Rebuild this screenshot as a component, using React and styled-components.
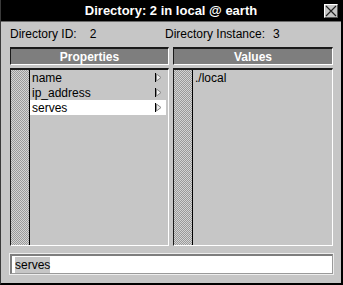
import React from 'react';
import { styled, createGlobalStyle } from 'styled-components';

const Global = createGlobalStyle`
  body {
    margin: 0;
    background: #c6c6c6;
    font-family: "Liberation Sans", Arial, sans-serif;
  }
`;

const Window = styled.div`
  width: 343px;
  height: 285px;
  box-sizing: border-box;
  background: #c6c6c6;
  border-left: 1px solid #3a3a3a;
  border-right: 2px solid #000;
  border-bottom: 2px solid #000;
  display: flex;
  flex-direction: column;
  overflow: hidden;
`;

const TitleBar = styled.div`
  height: 22px;
  box-sizing: border-box;
  flex-shrink: 0;
  background: #000;
  color: #fff;
  display: flex;
  align-items: center;
  justify-content: center;
  position: relative;
  font-size: 13px;
  font-weight: 700;
  border-bottom: 1px solid #6a6a6a;
`;

const CloseButton = styled.div`
  position: absolute;
  right: 3px;
  top: 4px;
  width: 14px;
  height: 14px;
  box-sizing: border-box;
  background: #c6c6c6;
  border-top: 1px solid #fff;
  border-left: 1px solid #fff;
  border-right: 1px solid #555;
  border-bottom: 1px solid #555;
  display: flex;
  align-items: center;
  justify-content: center;
`;

const Body = styled.div`
  flex: 1;
  display: flex;
  flex-direction: column;
  padding: 2px 8px 0 9px;
`;

const InfoRow = styled.div`
  display: grid;
  grid-template-columns: 155px 1fr;
  height: 20px;
  align-items: center;
  font-size: 12px;
  color: #000;
`;

const Info = styled.div`
  display: flex;
  gap: ${(p) => p.$gap}px;
`;

const Columns = styled.div`
  margin-top: 3px;
  display: grid;
  grid-template-columns: 159px 160px;
  column-gap: 4px;
`;

const Column = styled.div`
  display: flex;
  flex-direction: column;
  gap: 3px;
`;

const Header = styled.div`
  height: 18px;
  box-sizing: border-box;
  background: #7e7e7e;
  border-top: 2px solid #1a1a1a;
  border-left: 1px solid #1a1a1a;
  border-right: 1px solid #fff;
  border-bottom: 1px solid #fff;
  color: #fff;
  font-size: 12px;
  font-weight: 700;
  display: flex;
  align-items: center;
  justify-content: center;
`;

const ListFrame = styled.div`
  height: 178px;
  box-sizing: border-box;
  border-top: 2px solid #1a1a1a;
  border-left: 1px solid #1a1a1a;
  border-right: 1px solid #fff;
  border-bottom: 1px solid #fff;
  display: flex;
`;

const Gutter = styled.div`
  width: 18px;
  flex-shrink: 0;
  border-right: 1px solid #000;
  background: repeating-conic-gradient(#9a9a9a 0 25%, #d4d4d4 0 50%) 0 0 / 2px 2px;
`;

const List = styled.div`
  flex: 1;
  padding: 0 2px 0 0;
  display: flex;
  flex-direction: column;
`;

const Item = styled.div`
  height: 15px;
  display: flex;
  align-items: center;
  justify-content: space-between;
  padding: 0 4px 0 2px;
  font-size: 12px;
  color: #000;
  background: ${(p) => (p.$selected ? '#fff' : 'transparent')};
`;

const Field = styled.div`
  margin-top: 8px;
  height: 20px;
  box-sizing: border-box;
  background: #fff;
  border-top: 2px solid #7e7e7e;
  border-left: 2px solid #7e7e7e;
  border-right: 1px solid #9a9a9a;
  border-bottom: 1px solid #9a9a9a;
  outline: 1px solid #eee;
  display: flex;
  align-items: center;
  padding-left: 3px;
  font-size: 12px;
`;

const Selected = styled.span`
  background: #c6c6c6;
  padding: 1px 0;
`;

const Arrow = () => (
  <svg width="7" height="9" viewBox="0 0 7 9">
    <line x1="0.5" y1="0" x2="0.5" y2="9" stroke="#000" />
    <polygon points="1.5,1 6,4.5 1.5,8" fill="#eee" stroke="#888" strokeWidth="1" />
  </svg>
);

const properties = ['name', 'ip_address', 'serves'];

export default function App() {
  return (
    <>
      <Global />
      <Window>
        <TitleBar>
          Directory: 2 in local @ earth
          <CloseButton>
            <svg width="12" height="12" viewBox="0 0 12 12">
              <path d="M1 1 L11 11 M11 1 L1 11" stroke="#222" strokeWidth="1.2" />
            </svg>
          </CloseButton>
        </TitleBar>
        <Body>
          <InfoRow>
            <Info $gap={13}>
              <span>Directory ID:</span>
              <span>2</span>
            </Info>
            <Info $gap={8}>
              <span>Directory Instance:</span>
              <span>3</span>
            </Info>
          </InfoRow>
          <Columns>
            <Column>
              <Header>Properties</Header>
              <ListFrame>
                <Gutter />
                <List>
                  {properties.map((p) => (
                    <Item key={p} $selected={p === 'serves'}>
                      <span>{p}</span>
                      <Arrow />
                    </Item>
                  ))}
                </List>
              </ListFrame>
            </Column>
            <Column>
              <Header>Values</Header>
              <ListFrame>
                <Gutter />
                <List>
                  <Item>./local</Item>
                </List>
              </ListFrame>
            </Column>
          </Columns>
          <Field>
            <Selected>serves</Selected>
          </Field>
        </Body>
      </Window>
    </>
  );
}
